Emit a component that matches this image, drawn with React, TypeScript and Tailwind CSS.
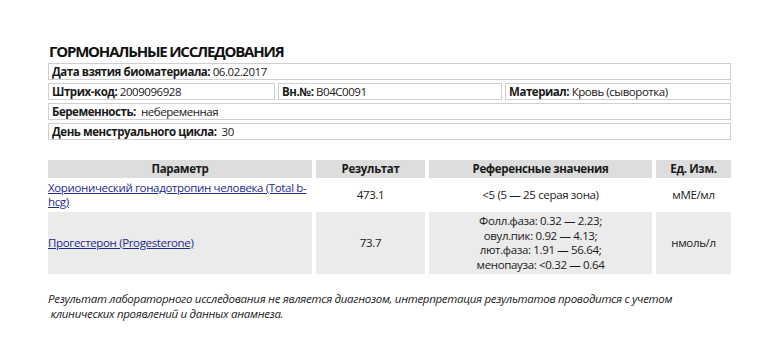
import React from "react";

const font = { fontFamily: '"Open Sans", "Noto Sans", sans-serif' };

function Box({ children, className = "" }: { children: React.ReactNode; className?: string }) {
  return (
    <div className={`h-[17px] border border-[#cfcfcf] px-[3px] flex items-center text-[11.5px] leading-[15px] text-[#1a1a1a] whitespace-nowrap tracking-[-0.45px] ${className}`}>
      {children}
    </div>
  );
}

export default function App() {
  return (
    <div className="w-[770px] h-[352px] bg-white overflow-hidden" style={font}>
      <div className="pl-[48px] pt-[41px] w-[731px]">
        <div className="text-[15px] leading-[20px] font-bold text-[#111] tracking-[-1.2px] pl-[1px]">
          ГОРМОНАЛЬНЫЕ ИССЛЕДОВАНИЯ
        </div>
        <div className="mt-[2px] flex flex-col gap-[3px]">
          <Box>
            <b>Дата взятия биоматериала:</b>&nbsp;06.02.2017
          </Box>
          <div className="flex gap-[3px]">
            <Box className="w-[227px]">
              <b>Штрих-код:</b>&nbsp;2009096928
            </Box>
            <Box className="w-[224px]">
              <b>Вн.№:</b>&nbsp;B04C0091
            </Box>
            <Box className="flex-1">
              <b>Материал:</b>&nbsp;Кровь (сыворотка)
            </Box>
          </div>
          <Box>
            <b>Беременность:</b>&nbsp;&nbsp;небеременная
          </Box>
          <Box>
            <b>День менструального цикла:</b>&nbsp;&nbsp;30
          </Box>
        </div>

        <div className="mt-[20px] grid grid-cols-[264px_109px_223px_75px] gap-[4px] text-[11.5px] leading-[14.5px] text-[#1a1a1a] tracking-[-0.35px]">
          <div className="h-[18px] bg-[#dddddd] font-bold flex items-center justify-center">Параметр</div>
          <div className="h-[18px] bg-[#dddddd] font-bold flex items-center justify-center">Результат</div>
          <div className="h-[18px] bg-[#dddddd] font-bold flex items-center justify-center">Референсные значения</div>
          <div className="h-[18px] bg-[#dddddd] font-bold flex items-center justify-center">Ед. Изм.</div>

          <div className="h-[26px] flex items-center">
            <a className="text-[#1d2a93] underline leading-[14px] whitespace-nowrap">
              Хорионический гонадотропин человека (Total b-<br />hcg)
            </a>
          </div>
          <div className="flex items-center justify-center">473.1</div>
          <div className="flex items-center justify-center">&lt;5 (5 — 25 серая зона)</div>
          <div className="flex items-center justify-center">мМЕ/мл</div>

          <div className="h-[62px] bg-[#ebebeb] flex items-center">
            <a className="text-[#1d2a93] underline">Прогестерон (Progesterone)</a>
          </div>
          <div className="bg-[#ebebeb] flex items-center justify-center">73.7</div>
          <div className="bg-[#ebebeb] flex flex-col items-center justify-center">
            <div>Фолл.фаза: 0.32 — 2.23;</div>
            <div>овул.пик: 0.92 — 4.13;</div>
            <div>лют.фаза: 1.91 — 56.64;</div>
            <div>менопауза: &lt;0.32 — 0.64</div>
          </div>
          <div className="bg-[#ebebeb] flex items-center justify-center">нмоль/л</div>
        </div>

        <div className="mt-[17px] italic text-[11.5px] leading-[15px] text-[#1a1a1a] tracking-[-0.3px]">
          <div>Результат лабораторного исследования не является диагнозом, интерпретация результатов проводится с учетом</div>
          <div>&nbsp;клинических проявлений и данных анамнеза.</div>
        </div>
      </div>
    </div>
  );
}
